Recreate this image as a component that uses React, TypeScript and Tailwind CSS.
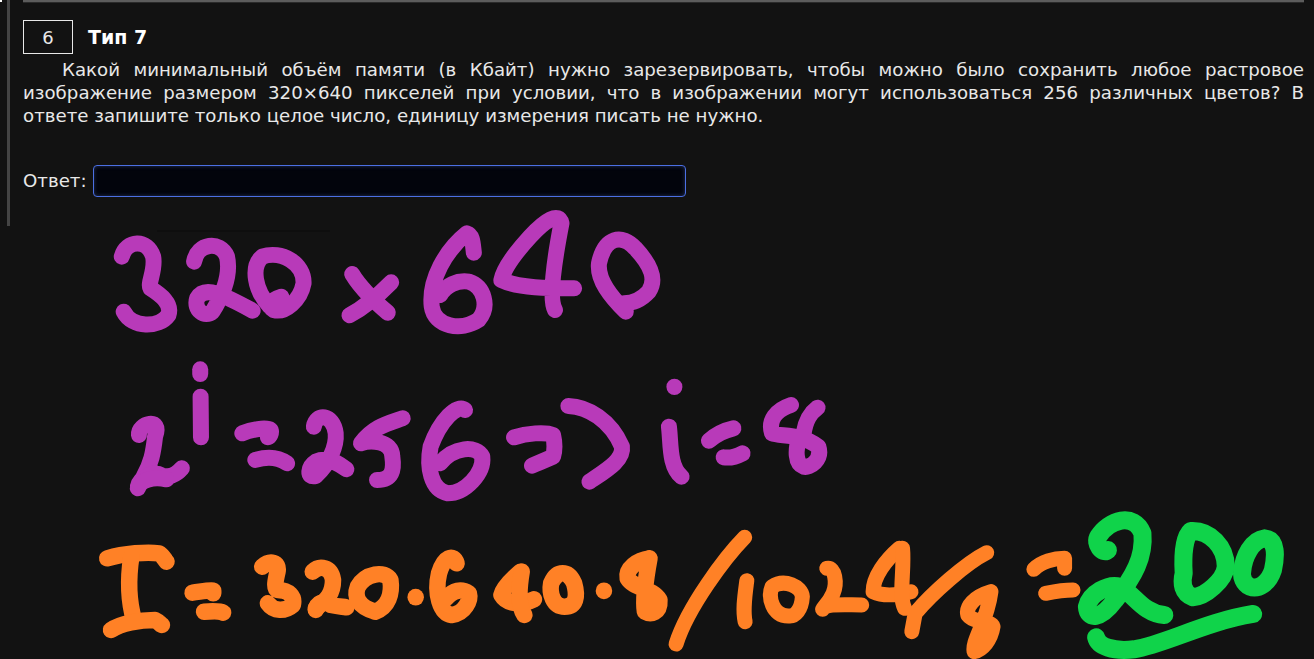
import React from 'react';

const PURPLE = '#b83ab9';
const ORANGE = '#ff8126';
const GREEN = '#10d34a';

// ink strokes traced per region; each group has its own origin and scale
const firstLines = [
  'M83 170 C95 120 150 115 165 170 C172 210 150 250 158 265 C185 285 215 310 205 345 C180 385 110 385 88 335',
  'M272 185 C280 130 340 120 358 170 C370 230 340 300 320 335 C300 355 270 330 280 295 C300 255 350 285 425 332',
  'M470 320 C430 270 420 200 450 170 C500 150 560 190 558 250 C550 300 510 340 480 330 C465 320 470 300 500 290',
  'M685 222 C710 270 750 310 778 338',
  'M787 247 C750 290 720 320 678 346',
  'M1003 158 C1000 130 1000 105 985 100 C930 150 885 240 893 320 C900 380 970 395 1015 360 C1045 320 1030 260 990 245 C960 240 930 255 915 285',
  'M1215 330 C1200 300 1210 200 1232 70 C1225 35 1190 60 1150 110 C1110 160 1080 210 1075 240 C1120 265 1200 265 1265 265',
  'M1400 335 C1360 290 1325 240 1330 190 C1345 110 1390 100 1425 145 C1470 200 1480 240 1460 275 C1440 300 1420 310 1395 310',
  'M128 705 C125 670 190 650 170 710 C165 760 160 790 140 830',
  'M125 860 C130 830 170 815 185 825 C205 835 225 825 240 805',
  'M125 865 C135 835 150 825 170 820',
  'M132 850 C150 835 175 832 200 838',
  'M288 508 L288 522',
  'M289 590 L290 712',
  'M398 700 C420 690 460 680 472 690 C475 700 470 710 465 712',
  'M432 780 C460 770 490 770 515 790',
  'M585 680 C590 640 635 640 642 700 C645 740 625 790 590 828 C565 835 570 800 590 785 C620 770 650 790 670 808',
  'M817 655 C780 670 740 680 708 730 C730 720 790 720 790 770 C795 810 790 840 750 840',
  'M980 630 C960 610 915 660 890 740 C880 800 890 870 935 880 C980 880 1030 820 1025 770 C1010 735 950 740 915 790',
  'M1108 712 C1140 700 1190 695 1210 705 C1215 730 1215 750 1210 770 C1190 780 1170 790 1155 797',
  'M1250 618 C1300 620 1360 660 1390 740 C1395 780 1350 810 1305 845',
];

const iEight = [
  'M58 50 L58 51',
  'M45 170 C50 220 45 290 75 320',
  'M140 212 C160 190 180 180 198 175',
  'M175 262 C190 265 205 260 220 250',
  'M398 113 C380 130 370 150 365 190',
  'M335 105 C300 120 280 150 290 190 C310 200 360 190 400 230 C410 270 380 295 365 290 C345 280 345 240 355 200',
];

const orangeLeft = [
  'M45 175 C90 160 150 155 180 160 C190 165 195 180 200 185',
  'M108 170 C100 230 100 300 115 360',
  'M55 390 C80 370 130 360 170 360 C180 365 185 375 188 375',
  'M268 278 C290 275 310 270 322 272 L322 280',
  'M298 335 C320 333 340 333 348 338',
  'M450 200 C470 180 495 185 490 215 C485 240 480 265 490 270 C520 270 535 290 530 315 C510 335 480 335 465 310',
  'M582 215 C600 195 630 200 635 240 C635 280 620 300 590 325',
  'M590 330 C590 310 610 300 630 315 C650 320 660 320 670 322',
  'M745 335 C700 320 690 290 700 260 C720 220 770 210 785 240 C790 280 780 320 745 335',
  'M851 291 L851 292',
  'M958 190 C950 160 925 170 912 220 C900 280 915 340 945 345 C980 340 995 300 990 280 C970 265 950 270 930 295',
  'M1125 215 C1110 230 1080 260 1075 285 C1090 315 1130 315 1160 298',
  'M1128 215 C1120 270 1120 320 1135 345',
  'M1240 320 C1210 320 1200 280 1205 250 C1220 210 1250 210 1265 250 C1275 290 1270 320 1240 320',
  'M1343 272 L1343 273',
  'M1462 175 C1430 180 1400 205 1405 235 C1420 265 1470 265 1488 300 C1490 340 1465 345 1450 335 C1445 300 1450 250 1462 175',
];

const orangeRight = [
  'M225 502 C180 560 90 710 62 822',
  'M230 632 C225 680 220 720 226 755',
  'M330 738 C290 740 280 680 290 650 C320 625 360 650 362 680 C360 720 345 740 330 738',
  'M420 595 C440 590 445 640 435 670 C425 700 410 715 410 718 C420 700 460 705 503 705',
  'M592 535 C560 570 530 620 530 665 C555 680 590 675 620 665',
  'M600 535 C605 600 590 680 605 715',
  'M800 548 C750 580 670 670 630 730 L622 785',
  'M810 665 C770 680 750 710 755 735 C770 760 810 750 815 770 C810 810 790 840 770 845 C765 810 800 760 810 665',
  'M912 598 C930 575 960 565 985 565 L985 595',
  'M940 670 C960 665 985 660 1005 660',
];

const greenAnswer = [
  'M1088 540 C1075 555 1055 520 1065 500 C1090 450 1150 425 1170 490 C1175 560 1150 620 1105 690 C1070 750 1040 750 1038 710 C1045 670 1090 640 1115 650 C1150 670 1170 730 1222 735',
  'M1268 610 C1265 550 1270 500 1285 483 C1330 480 1368 530 1368 590 C1365 630 1320 680 1290 682 C1265 670 1262 640 1268 610 Z',
  'M1407 605 C1410 560 1430 510 1460 505 C1490 510 1487 560 1480 600 C1470 640 1445 660 1425 650 C1410 640 1405 620 1407 605 Z',
  'M1060 802 C1065 830 1100 845 1150 838 C1220 825 1320 755 1433 732',
];

function Strokes({ paths, color, width }: { paths: string[]; color: string; width: number }) {
  return (
    <g fill="none" stroke={color} strokeWidth={width} strokeLinecap="round" strokeLinejoin="round">
      {paths.map((d) => (
        <path key={d} d={d} vectorEffect="non-scaling-stroke" />
      ))}
    </g>
  );
}

function Ink() {
  return (
    <svg className="absolute top-0 left-0 pointer-events-none" width="1314" height="659" viewBox="0 0 1314 659">
      <path d="M157 231 L330 231" stroke="#0a0a0a" strokeWidth="1" />
      <g transform="translate(90 200) scale(0.3827 0.3333)">
        <Strokes paths={firstLines} color={PURPLE} width={16} />
      </g>
      <g transform="translate(650 370) scale(0.4209 0.3333)">
        <Strokes paths={iEight} color={PURPLE} width={16} />
      </g>
      <g transform="translate(90 500) scale(0.3827 0.3333)">
        <Strokes paths={orangeLeft} color={ORANGE} width={16.5} />
      </g>
      <g transform="translate(650 370) scale(0.4209 0.3333)">
        <Strokes paths={orangeRight} color={ORANGE} width={15} />
        <Strokes paths={greenAnswer} color={GREEN} width={18} />
      </g>
    </svg>
  );
}

export default function App() {
  return (
    <div
      className="relative h-[659px] w-[1314px] overflow-hidden bg-[#121212] text-[#e8e8e8]"
      style={{ fontFamily: '"DejaVu Sans", Verdana, sans-serif' }}
    >
      <div className="absolute top-0 left-0 h-[2px] w-[2px] bg-white" />
      <div className="ml-[7px] h-[226px] w-[1307px] border-l-[3px] border-[#444444] pl-[13px] pr-[10px]">
        <div className="h-[3px] border-t-2 border-b border-t-[#5c5c5c] border-b-[#2a2a2a]" />
        <div className="mt-[17px] flex items-center">
          <div className="flex h-[34px] w-[50px] items-center justify-center border border-[#e8e8e8] text-[18px]">6</div>
          <div className="ml-[15px] pt-[1px] text-[19px] font-bold text-white">Тип 7</div>
        </div>
        <p className="mt-[4px] text-justify text-[18.2px] leading-[23px] indent-[39px]">
          Какой минимальный объём памяти (в Кбайт) нужно зарезервировать, чтобы можно было сохранить любое растровое
          изображение размером 320×640 пикселей при условии, что в изображении могут использоваться 256 различных
          цветов? В ответе{'\u00a0'}запишите только целое число, единицу измерения писать не нужно.
        </p>
        <div className="mt-[38px] flex items-center">
          <span className="text-[18.2px]">Ответ:</span>
          <input
            type="text"
            className="ml-[6px] h-[32px] w-[593px] rounded-[4px] border border-[#4b6fe3] bg-[#02040c] shadow-[inset_0_0_4px_rgba(70,90,160,0.5)] outline-none"
          />
        </div>
      </div>
      <Ink />
    </div>
  );
}
